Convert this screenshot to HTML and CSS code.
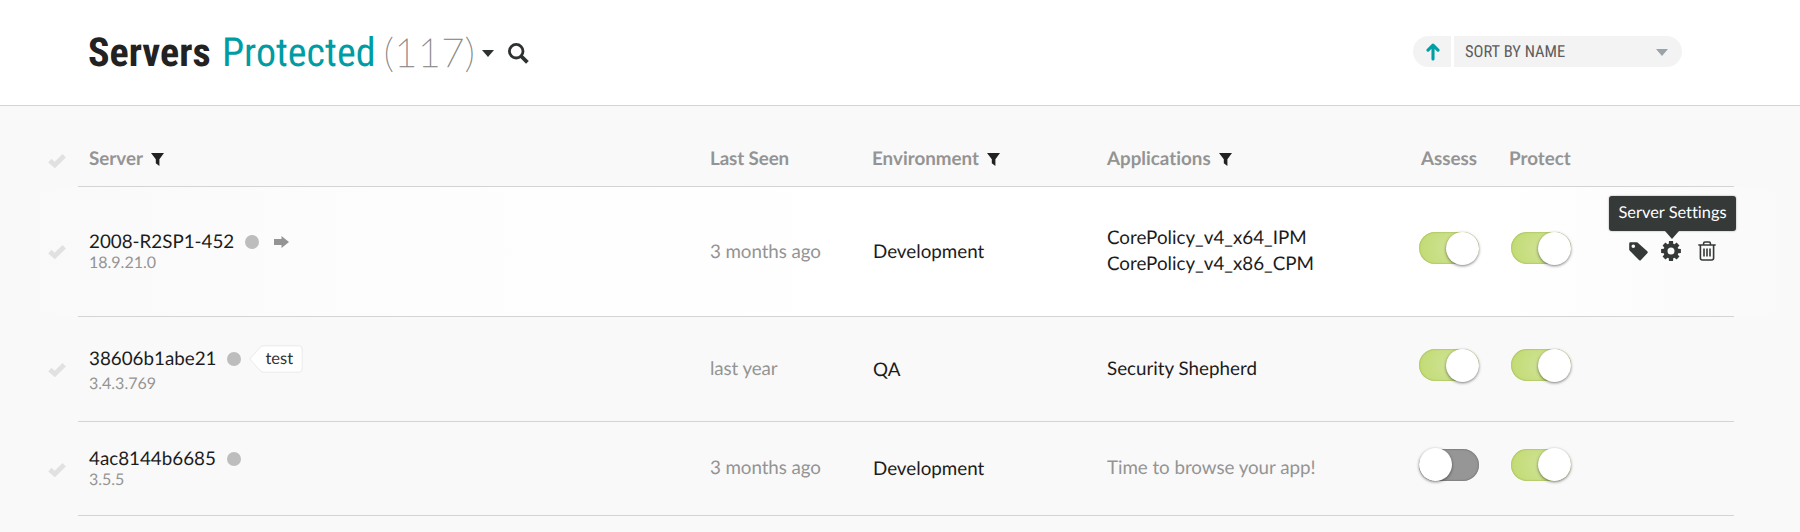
FILE: index.html
```html
<!DOCTYPE html>
<html lang="en">
<head>
<meta charset="utf-8">
<title>Servers</title>
<link rel="stylesheet" href="styles.css">
</head>
<body>
<svg class="defs" aria-hidden="true">
  <symbol id="check" viewBox="0 0 18 14"><path d="M1.8 6.6 6.8 11 16.2 1.8" fill="none" stroke="currentColor" stroke-width="4.8"/></symbol>
  <symbol id="filter" viewBox="0 0 13 13"><path d="M0 0H13L8.4 6.2V13L4.8 10.2V6.2Z" fill="currentColor"/></symbol>
</svg>
<header class="topbar">
  <h1 class="title"><span class="title-main">Servers</span><span class="title-filter">Protected</span><span class="title-count">(117)</span></h1>
  <svg class="title-caret" viewBox="0 0 12 7"><path d="M0 0H12L6 7Z" fill="#2d3130"/></svg>
  <svg class="search" viewBox="0 0 21 21"><circle cx="8.2" cy="8.2" r="6.8" fill="none" stroke="#2d3130" stroke-width="2.8"/><path d="M13 13 19.4 19.4" stroke="#2d3130" stroke-width="3.8"/></svg>
  <div class="sort">
    <span class="sort-dir"><svg width="14" height="18" viewBox="0 0 14 18"><path d="M7 16V3M2 7.2 7 2.2 12 7.2" fill="none" stroke="#009fa5" stroke-width="3.1" stroke-linecap="round" stroke-linejoin="round"/></svg></span>
    <span class="sort-field"><span class="sort-label">SORT BY NAME</span><svg width="12" height="7" viewBox="0 0 12 7"><path d="M0 0H12L6 7Z" fill="#98a4a9"/></svg></span>
  </div>
</header>
<main class="table">
  <div class="row row-head">
    <svg class="check"><use href="#check"/></svg>
    <div class="cells">
      <div class="server head">Server<svg class="filter"><use href="#filter"/></svg></div>
      <div class="seen head">Last Seen</div>
      <div class="env head">Environment<svg class="filter"><use href="#filter"/></svg></div>
      <div class="apps head">Applications<svg class="filter"><use href="#filter"/></svg></div>
      <div class="assess head">Assess</div>
      <div class="protect head">Protect</div>
    </div>
  </div>
  <div class="row row-first">
    <svg class="check"><use href="#check"/></svg>
    <div class="cells">
      <div class="server"><div class="name">2008-R2SP1-452<i class="dot"></i><svg class="arrow" viewBox="0 0 15 12"><path d="M0 3H7.5V0L15 6 7.5 12V9H0Z" fill="#949494"/></svg></div><div class="version">18.9.21.0</div></div>
      <div class="seen">3 months ago</div>
      <div class="env">Development</div>
      <div class="apps"><div>CorePolicy_v4_x64_IPM</div><div>CorePolicy_v4_x86_CPM</div></div>
      <div class="assess"><span class="toggle on"></span></div>
      <div class="protect"><span class="toggle on"></span></div>
      <div class="actions">
        <svg class="tag-icon" viewBox="0 0 19 19"><path fill-rule="evenodd" fill="#353938" d="M1.4.2H8.2L18.3 9.2Q19.2 10.2 18.3 11.2L12 18Q11 19 10 18L.6 8.6Q.2 8.2.2 7.6V1.4Q.2.2 1.4.2ZM4.3 2.5A1.8 1.8 0 1 0 4.3 6.1 1.8 1.8 0 1 0 4.3 2.5Z"/></svg>
        <span class="settings">
          <span class="tooltip">Server Settings</span>
          <svg width="20" height="20" viewBox="-10 -10 20 20"><g fill="#353938"><path id="tooth" d="M-2-9.9H2L2.5-5H-2.5Z"/><use href="#tooth" transform="rotate(45)"/><use href="#tooth" transform="rotate(90)"/><use href="#tooth" transform="rotate(135)"/><use href="#tooth" transform="rotate(180)"/><use href="#tooth" transform="rotate(225)"/><use href="#tooth" transform="rotate(270)"/><use href="#tooth" transform="rotate(315)"/></g><circle r="5.5" fill="none" stroke="#353938" stroke-width="4"/></svg>
        </span>
        <svg class="trash" viewBox="0 0 18 20"><path d="M.3 4H17.7M5.6 3.6V2.6Q5.6 1 7 1H11Q12.4 1 12.4 2.6V3.6M2.4 4.5V17Q2.4 19 4.4 19H13.6Q15.6 19 15.6 17V4.5M6 7.4V15.6M9 7.4V15.6M12 7.4V15.6" fill="none" stroke="#353938" stroke-width="1.6"/></svg>
      </div>
    </div>
  </div>
  <div class="row row-second">
    <svg class="check"><use href="#check"/></svg>
    <div class="cells">
      <div class="server"><div class="name">38606b1abe21<i class="dot"></i><span class="tag"><svg class="tag-shape" viewBox="0 0 54 28"><path d="M.8 14 10.5 3Q12.3.8 15 .8H50Q53.2.8 53.2 4V24Q53.2 27.2 50 27.2H15Q12.3 27.2 10.5 25Z" fill="#fff" stroke="#e9e9e9"/></svg><span class="tag-text">test</span></span></div><div class="version">3.4.3.769</div></div>
      <div class="seen">last year</div>
      <div class="env">QA</div>
      <div class="apps">Security Shepherd</div>
      <div class="assess"><span class="toggle on"></span></div>
      <div class="protect"><span class="toggle on"></span></div>
    </div>
  </div>
  <div class="row row-third">
    <svg class="check"><use href="#check"/></svg>
    <div class="cells">
      <div class="server"><div class="name">4ac8144b6685<i class="dot"></i></div><div class="version">3.5.5</div></div>
      <div class="seen">3 months ago</div>
      <div class="env">Development</div>
      <div class="apps muted">Time to browse your app!</div>
      <div class="assess"><span class="toggle"></span></div>
      <div class="protect"><span class="toggle on"></span></div>
    </div>
  </div>
</main>
</body>
</html>
```
FILE: styles.css
```css
* { box-sizing: border-box; }
body { margin: 0; width: 1800px; height: 532px; overflow: hidden; background: #f9f9f9; color: #1c1c1c; font: 18.8px/24px Lato, sans-serif; font-variant-ligatures: none; text-rendering: geometricPrecision; }
svg { display: block; flex: none; }
.defs { display: none; }

.topbar { display: flex; align-items: flex-start; height: 106px; padding-left: 88px; background: #fff; border-bottom: 1px solid #d3d4d4; }
.title { display: flex; width: 387px; margin: 29px 0 0; font: 400 40px/48px "Roboto Condensed", Roboto, sans-serif; white-space: nowrap; }
.title-main { width: 134px; font-weight: 700; color: #222; }
.title-filter { width: 162px; color: #009ca3; }
.title-count { margin-top: -1px; font-family: Lato, sans-serif; font-weight: 200; color: #8c8c8c; -webkit-text-stroke: .6px #8c8c8c; letter-spacing: .3px; }
.title-caret { width: 12px; height: 7px; margin: 50px 0 0 7px; }
.search { width: 21px; height: 21px; margin: 43px 0 0 14px; }
.sort { display: flex; gap: 3px; width: 269px; height: 31px; margin: 36px 118px 0 auto; border-radius: 16px; overflow: hidden; font: 400 16.5px/31px "Roboto Condensed", Roboto, sans-serif; color: #5d5d5d; }
.sort-dir { display: flex; align-items: center; width: 38px; padding: 1px 0 0 13px; background: #f3f3f3; }
.sort-field { display: flex; flex: 1; align-items: center; justify-content: space-between; padding: 2px 14px 0 11px; background: #f3f3f3; }

.row { display: flex; padding-left: 48px; }
.check { width: 18px; height: 14px; margin-right: 12px; color: #e1e1e1; }
.cells { display: grid; grid-template-columns: 632px 163px 234px 312px 92px 98px 125px; width: 1656px; border-bottom: 1px solid #d4d4d4; align-items: start; white-space: nowrap; }
.server { padding-left: 11px; }
.head { display: flex; font-weight: 700; color: #949494; }
.filter { width: 13px; height: 13px; margin: 6px 0 0 8px; color: #222; }
.name { display: flex; align-items: center; height: 24px; }
.version { font-size: 16px; line-height: 20px; color: #949494; }
.dot { width: 14px; height: 14px; margin-left: 11px; border-radius: 50%; background: #bdbdbd; }
.arrow { width: 15px; height: 12px; margin-left: 15px; }
.seen, .muted { color: #949494; letter-spacing: -.1px; }
.muted { letter-spacing: -.05px; }

.row-head { height: 81px; }
.row-head .check { margin-top: 48px; }
.row-head .cells { padding-top: 41px; }
.row-head .env { margin-left: -1px; }
.row-head .assess { padding-left: 2px; }
.row-head .protect { margin-left: -2px; }

.row-first { height: 130px; background: linear-gradient(90deg, #f9f9f9 10px, #fdfdfd 400px, #fff 900px, #fff 1500px, #f9f9f9 1790px); }
.row-first .check { margin-top: 58px; }
.row-first .server { padding-top: 43px; }
.row-first .version { margin-top: -1px; }
.row-first .seen, .row-first .env { padding-top: 53px; }
.row-first .apps { padding-top: 38px; line-height: 25.5px; }
.row-first .toggle { margin-top: 45.4px; }

.row-second { height: 105px; }
.row-second .check { margin-top: 46px; }
.row-second .server { padding-top: 30px; }
.row-second .version { margin-top: 3px; }
.row-second .seen, .row-second .apps { padding-top: 40px; }
.row-second .env { padding-top: 41px; }
.row-second .toggle { margin-top: 32.4px; }

.row-third { height: 94px; }
.row-third .check { margin-top: 41px; }
.row-third .server { padding-top: 25px; }
.row-third .version { margin-top: -1px; }
.row-third .seen, .row-third .apps { padding-top: 34px; }
.row-third .env { padding-top: 35px; }
.row-third .toggle { margin-top: 26.6px; }

.toggle { display: flex; align-items: center; width: 60px; height: 32px; margin-left: -.5px; border-radius: 16px; background: #969696; box-shadow: inset 0 0 2px #555; }
.toggle::before { content: ""; width: 33px; height: 33px; margin-left: 0; flex: none; border-radius: 50%; background: #fff; box-shadow: 0 1px 3px rgba(0, 0, 0, .5); }
.toggle.on { background: radial-gradient(circle at 50% 50%, #cfe294, #c2db72 32px); box-shadow: inset 0 0 2px #8ba53a; }
.toggle.on::before { margin-left: 27px; }

.actions { display: flex; padding: 54px 0 0 20px; }
.tag-icon { width: 19px; height: 19px; margin-top: 1px; }
.settings { position: relative; width: 20px; height: 20px; margin: 0 17px 0 13px; }
.tooltip { position: absolute; right: -55px; bottom: 30px; width: 127px; height: 35px; border-radius: 3px; background: #353938; color: #fff; font-size: 16.4px; line-height: 34px; text-align: center; box-shadow: 0 0 2px rgba(0, 0, 0, .4); }
.tooltip::after { content: ""; position: absolute; left: 56px; top: 35px; border: solid transparent; border-width: 8px 7px 0; border-top-color: #353938; }
.trash { width: 18px; height: 20px; }

.tag { display: grid; width: 54px; height: 28px; margin: 0 0 0 8px; }
.tag-shape, .tag-text { grid-area: 1 / 1; width: 54px; height: 28px; }
.tag-text { z-index: 1; padding-left: 16px; font-size: 16.5px; line-height: 26px; color: #333; }
```
